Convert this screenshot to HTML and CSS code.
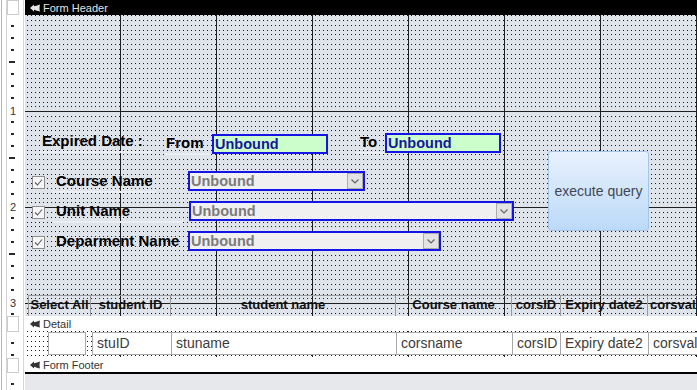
FILE: index.html
```html
<!DOCTYPE html>
<html lang="en">
<head>
    <meta charset="utf-8">
    <title>Form Design View</title>
    <link rel="stylesheet" href="styles.css">
</head>
<body>
<div class="designer">
    <div class="ruler">
        <div class="ruler-box"></div>
        <div class="ruler-scale scale-header"><span>1</span><span>2</span><span>3</span></div>
        <div class="ruler-box box-detail"></div>
        <div class="ruler-scale scale-detail"></div>
        <div class="ruler-box"></div>
        <div class="ruler-scale scale-rest"></div>
    </div>

    <div class="form">
        <div class="bar bar-selected">
            <svg viewBox="0 0 10 8"><path d="M0 4 L4 0.5 L4 2.3 C6 1.6 8 1 10 0.4 C9.4 2.8 9.4 5.2 10 7.6 C8 7 6 6.4 4 5.7 L4 7.5 Z"/></svg>
            <span>Form Header</span>
        </div>

        <div class="section sec-header">
            <div class="ctl lbl l-expired">Expired Date :</div>
            <div class="ctl lbl l-from">From</div>
            <div class="ctl txt t-from">Unbound</div>
            <div class="ctl lbl l-to">To</div>
            <div class="ctl txt t-to">Unbound</div>

            <div class="ctl chk c-course"><svg viewBox="0 0 11 11"><polyline points="2,5.5 4.5,8 9,2.5"/></svg></div>
            <div class="ctl lbl l-course">Course Name</div>
            <div class="ctl cbo b-course"><span>Unbound</span><span class="cbo-btn"><svg viewBox="0 0 8 5"><polyline points="0.5,0.5 4,4 7.5,0.5"/></svg></span></div>

            <div class="ctl chk c-unit"><svg viewBox="0 0 11 11"><polyline points="2,5.5 4.5,8 9,2.5"/></svg></div>
            <div class="ctl lbl l-unit">Unit Name</div>
            <div class="ctl cbo b-unit"><span>Unbound</span><span class="cbo-btn"><svg viewBox="0 0 8 5"><polyline points="0.5,0.5 4,4 7.5,0.5"/></svg></span></div>

            <div class="ctl chk c-dept"><svg viewBox="0 0 11 11"><polyline points="2,5.5 4.5,8 9,2.5"/></svg></div>
            <div class="ctl lbl l-dept">Deparment Name</div>
            <div class="ctl cbo b-dept"><span>Unbound</span><span class="cbo-btn"><svg viewBox="0 0 8 5"><polyline points="0.5,0.5 4,4 7.5,0.5"/></svg></span></div>

            <div class="ctl btn">execute query</div>

            <div class="col-heads">
                <div class="h-sel">Select All</div>
                <div class="h-id">student ID</div>
                <div class="h-name">student name</div>
                <div class="h-course">Course name</div>
                <div class="h-cid">corsID</div>
                <div class="h-exp">Expiry date2</div>
                <div class="h-val">corsvali</div>
            </div>
        </div>

        <div class="bar">
            <svg viewBox="0 0 10 8"><path d="M0 4 L4 0.5 L4 2.3 C6 1.6 8 1 10 0.4 C9.4 2.8 9.4 5.2 10 7.6 C8 7 6 6.4 4 5.7 L4 7.5 Z"/></svg>
            <span>Detail</span>
        </div>

        <div class="section sec-detail">
            <div class="detail-row">
                <div class="d-sel"></div>
                <div class="d-cell d-id">stuID</div>
                <div class="d-cell d-name">stuname</div>
                <div class="d-cell d-course">corsname</div>
                <div class="d-cell d-cid">corsID</div>
                <div class="d-cell d-exp">Expiry date2</div>
                <div class="d-cell d-val">corsval</div>
            </div>
        </div>

        <div class="bar">
            <svg viewBox="0 0 10 8"><path d="M0 4 L4 0.5 L4 2.3 C6 1.6 8 1 10 0.4 C9.4 2.8 9.4 5.2 10 7.6 C8 7 6 6.4 4 5.7 L4 7.5 Z"/></svg>
            <span>Form Footer</span>
        </div>
        <div class="form-end"></div>
    </div>
</div>
</body>
</html>
```

FILE: styles.css
```css
*{margin:0;padding:0;box-sizing:border-box;}
body{width:697px;height:390px;overflow:hidden;background:#e6e8ec;font-family:"Liberation Sans",Arial,sans-serif;}
.designer{display:flex;height:390px;}

/* vertical ruler */
.ruler{flex:none;width:25px;display:flex;flex-direction:column;
    background:linear-gradient(to right,#fff 0 1px,#b5b5b5 1px 2px,#fff 2px 6px,#d3d3d3 6px 7px,#fff 7px 23px,#d6d6d6 23px 24px,#fff 24px);}
.ruler-box{flex:none;height:15px;width:12px;margin-left:7px;background:#fff;border:1px solid #cbcbcb;}
.box-detail{height:16px;}
.ruler-scale{flex:none;display:flex;flex-direction:column;align-items:flex-start;
    background-image:repeating-linear-gradient(to bottom,transparent 0 10px,#2a2a2a 10px 12px),
                     repeating-linear-gradient(to bottom,transparent 0 46px,#2a2a2a 46px 48px,transparent 48px 96px);
    background-size:3px 100%,6px 100%;
    background-position:11px 0,9px 0;
    background-repeat:no-repeat;}
.scale-header{height:301px;padding:90px 0 0 9px;gap:84px;}
.scale-detail{height:26px;background-image:repeating-linear-gradient(to bottom,transparent 0 10px,#2a2a2a 10px 12px);background-size:3px 100%;background-position:11px 0;}
.scale-rest{flex:1;background-image:repeating-linear-gradient(to bottom,transparent 0 10px,#2a2a2a 10px 12px);background-size:3px 100%;background-position:11px 0;}
.ruler-scale span{height:12px;line-height:12px;font-size:11px;color:#333;background:#fff;padding:0 1px;}

/* form surface */
.form{flex:1;min-width:0;display:flex;flex-direction:column;overflow:hidden;}
.bar{flex:none;height:15px;display:flex;align-items:center;gap:3px;padding-left:5px;background:#fff;color:#333;font-size:11px;white-space:nowrap;}
.bar-selected{background:#000;color:#e4e4e4;}
.bar svg{width:10px;height:8px;fill:currentColor;flex:none;}

.section{flex:none;position:relative;background-color:#dfe3ea;
    background-image:
        repeating-linear-gradient(to right,transparent 0 95px,#1e1e1e 95px 96px),
        repeating-linear-gradient(to bottom,transparent 0 95px,#1e1e1e 95px 96px),
        conic-gradient(from 270deg at 1px 1px,#1a1a1a 0 90deg,transparent 90deg),
        conic-gradient(from 270deg at 1px 1px,#1a1a1a 0 90deg,transparent 90deg),
        conic-gradient(from 270deg at 1px 1px,#1a1a1a 0 90deg,transparent 90deg),
        conic-gradient(from 270deg at 1px 1px,#1a1a1a 0 90deg,transparent 90deg),
        conic-gradient(from 270deg at 1px 1px,#1a1a1a 0 90deg,transparent 90deg);
    background-size:auto,auto,4px 24px,4px 24px,4px 24px,4px 24px,4px 24px;
    background-position:0 0,0 1px,2px 0,2px 5px,2px 10px,2px 15px,2px 19px;}
.sec-header{height:301px;display:flex;flex-direction:column;justify-content:flex-end;}
.sec-detail{height:26px;background-color:#fff;padding-top:1px;}
.form-end{flex:none;height:2px;background:#000;}

/* controls on the header canvas */
.ctl{position:absolute;}
.lbl{height:22px;font-size:15px;font-weight:bold;line-height:20px;color:#000;white-space:nowrap;border-bottom:2px solid #eceef1;}
.l-expired{left:15px;top:116px;width:112px;padding-left:2px;}
.l-from{left:139px;top:118px;width:46px;padding-left:2px;}
.l-to{left:331px;top:117px;width:29px;padding-left:4px;}
.l-course{left:28px;top:156px;width:103px;padding-left:3px;}
.l-unit{left:28px;top:186px;width:130px;padding-left:3px;}
.l-dept{left:28px;top:216px;width:130px;padding-left:3px;border-bottom-color:transparent;}

.txt{height:20px;width:116px;border:2px solid #1414e6;background:#ccfecc;color:#17179a;font-size:14.5px;font-weight:bold;line-height:16px;padding-left:1px;}
.t-from{left:187px;top:119px;}
.t-to{left:360px;top:118px;}

.cbo{height:20px;display:flex;justify-content:space-between;border:2px solid #1414e6;background:#f0f0f0;color:#7b7b7b;font-size:14.5px;font-weight:bold;line-height:16px;padding-left:1px;}
.cbo-btn{width:16px;height:16px;display:flex;align-items:center;justify-content:center;background:#e3e3e3;border:1px solid #adadad;}
.cbo-btn svg{width:8px;height:5px;fill:none;stroke:#606060;stroke-width:1.1;}
.b-course{left:163px;top:156px;width:177px;}
.b-unit{left:164px;top:186px;width:325px;}
.b-dept{left:163px;top:216px;width:253px;}

.chk{width:13px;height:13px;border:1px solid #8d8d8d;background:#f6f6f6;}
.chk svg{display:block;width:11px;height:11px;fill:none;stroke:#5a5a5a;stroke-width:1.1;}
.c-course{left:7px;top:161px;}
.c-unit{left:7px;top:191px;}
.c-dept{left:7px;top:221px;}

.btn{left:523px;top:136px;width:101px;height:80px;display:flex;align-items:center;justify-content:center;border:1px solid #a3c5ea;border-radius:3px;background:linear-gradient(#e8f1fd,#bcdaf8);color:#3f4753;font-size:14px;}

/* column captions along the bottom of the header */
.col-heads{display:flex;height:21px;margin-left:3px;}
.col-heads div{flex:none;border-top:1px solid #9a9a9a;border-right:1px solid #9a9a9a;font-size:13px;font-weight:bold;line-height:17px;text-align:center;color:#111;white-space:nowrap;overflow:hidden;}
.col-heads .h-sel{width:63px;border-left:1px solid #9a9a9a;}
.h-id{width:80px;}
.h-name{width:225px;}
.h-course{width:116px;}
.h-cid{width:49px;}
.h-exp{width:87px;}
.col-heads .h-val{width:60px;text-align:left;padding-left:2px;}

/* detail row */
.detail-row{display:flex;height:23px;margin-left:23px;}
.d-sel{flex:none;width:38px;margin-right:6px;background:#fff;border:1px solid #a9a9a9;}
.d-cell{flex:none;height:23px;padding-left:4px;background:#fff;border:1px solid #a9a9a9;border-left:0;font-size:14px;line-height:21px;color:#3c3c3c;white-space:nowrap;overflow:hidden;}
.d-id{width:80px;border-left:1px solid #a9a9a9;}
.d-name{width:225px;}
.d-course{width:116px;}
.d-cid{width:48px;}
.d-exp{width:88px;}
.d-val{width:60px;}
```
